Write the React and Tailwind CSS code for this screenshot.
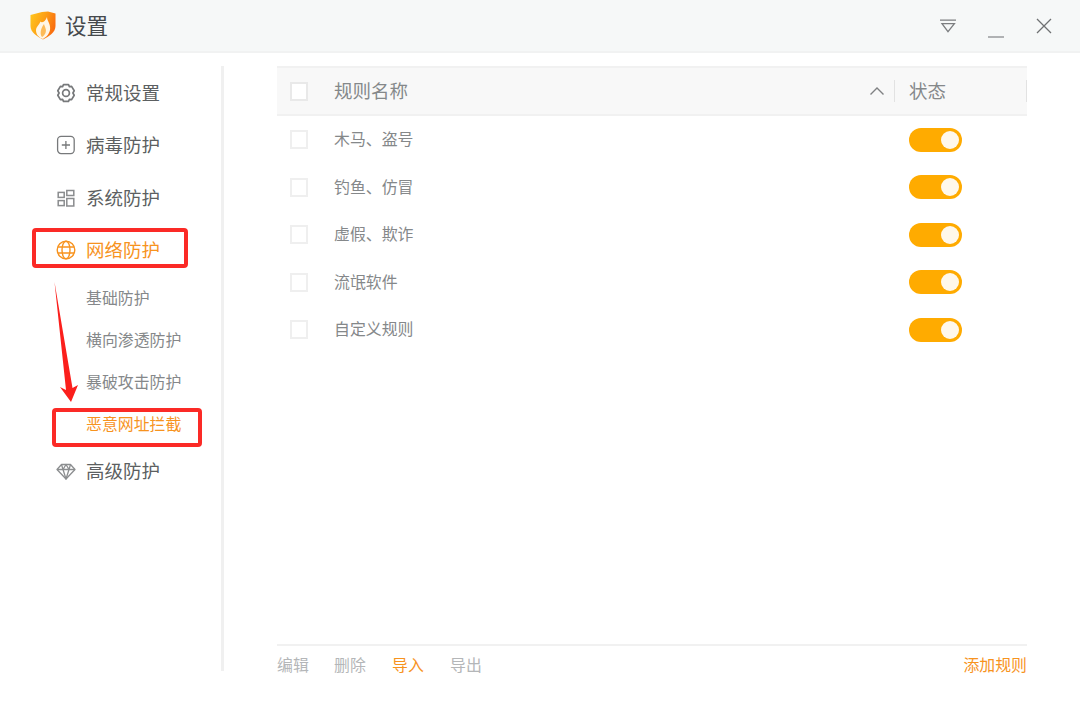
import React from "react";

function Gear() {
  return (
    <svg width="20" height="20" viewBox="0 0 20 20" fill="none" stroke="#77797b" strokeWidth="1.7" strokeLinejoin="round">
      <path d="M7.5 1.6 L12.5 1.6 L13.4 3.6 L15.6 3.4 L18.2 7.8 L16.9 10 L18.2 12.2 L15.6 16.6 L13.4 16.4 L12.5 18.4 L7.5 18.4 L6.6 16.4 L4.4 16.6 L1.8 12.2 L3.1 10 L1.8 7.8 L4.4 3.4 L6.6 3.6 Z" />
      <circle cx="10" cy="10" r="3.4" />
    </svg>
  );
}
function Plus() {
  return (
    <svg width="20" height="20" viewBox="0 0 20 20" fill="none" stroke="#77797b" strokeWidth="1.3">
      <rect x="1.6" y="1.4" width="16.6" height="17.2" rx="3.5" />
      <path d="M9.9 6v8M5.8 10h8.2" />
    </svg>
  );
}
function Blocks() {
  return (
    <svg width="20" height="20" viewBox="0 0 20 20" fill="none" stroke="#8a8c8e" strokeWidth="1.5">
      <rect x="2.2" y="4.4" width="6" height="5" />
      <rect x="2.2" y="12.6" width="6" height="5" />
      <path d="M10.8 2.6h7v5h-7zM10.8 10.6h7v7.4h-7z" />
    </svg>
  );
}
function Globe() {
  return (
    <svg width="20" height="20" viewBox="0 0 20 20" fill="none" stroke="#f7931e" strokeWidth="1.4">
      <circle cx="10" cy="10" r="8.8" />
      <ellipse cx="10" cy="10" rx="4" ry="8.8" />
      <path d="M2 7h16M2 13h16" />
    </svg>
  );
}
function Diamond() {
  return (
    <svg width="20" height="20" viewBox="0 0 20 20" fill="none" stroke="#8c8e90" strokeWidth="1.3" strokeLinejoin="round">
      <path d="M5.5 3.5h9l4.5 5-9 9.5-9-9.5z" />
      <path d="M1 8.5h18M7 8.5l3 9.5 3-9.5M5.5 3.5l1.5 5 3-5 3 5 1.5-5" />
    </svg>
  );
}

function Logo() {
  return (
    <svg width="26" height="29" viewBox="0 0 26 29">
      <defs>
        <linearGradient id="sh" x1="0" y1="0" x2="1" y2="0.4">
          <stop offset="0" stopColor="#ffc81e" />
          <stop offset="0.55" stopColor="#fda015" />
          <stop offset="1" stopColor="#f96f10" />
        </linearGradient>
      </defs>
      <path d="M0.5 4 L12 1 L18 0.5 L25.5 2.5 L25.5 15 C25.5 21.5 19 25.5 13 28.5 C7 25.5 0.5 21.5 0.5 15 Z" fill="url(#sh)" />
      <path d="M17 6 C17 10 21 13 20 19 C19.2 23.5 15.5 26.5 13 28 C9.5 27 6 24 6 19.5 C6 15.5 9 14.5 10.5 10.5 C11.5 12.5 15.5 10.5 17 6 Z" fill="#fff6e6" />
      <path d="M14 13 C14.5 16 17 18 15.5 22 C14.8 23.8 13 25.5 12 26 C10 23.5 10 18.5 14 13 Z" fill="#fdbb58" />
    </svg>
  );
}

function NavItem({ icon, label, active }) {
  return (
    <div className={`h-[52.5px] flex items-center pl-[56px] gap-[10px] text-[18.5px] ${active ? "text-[#f7931e]" : "text-[#5c5f61]"}`}>
      <span className="w-[20px] h-[20px] flex shrink-0">{icon}</span>
      <span>{label}</span>
    </div>
  );
}
function SubItem({ label, active }) {
  return (
    <div className={`h-[42px] flex items-center pl-[86px] text-[15.9px] ${active ? "text-[#f7931e]" : "text-[#85888a]"}`}>{label}</div>
  );
}
function Box({ header }) {
  return <span className={`block w-[18px] h-[19px] border-2 bg-white ${header ? "border-[#e9e9e9]" : "border-[#efefef]"}`} />;
}
function Toggle() {
  return (
    <span className="flex items-center justify-end w-[53px] h-[24px] rounded-full bg-[#ffab00] pr-[3px]">
      <span className="w-[18px] h-[18px] rounded-full bg-[#fff8ea]" />
    </span>
  );
}
function Row({ label }) {
  return (
    <div className="h-[47.5px] flex items-center text-[15.9px] text-[#85888a]">
      <span className="w-[57px] pl-[13px] flex"><Box /></span>
      <span className="flex-1 pb-[1px]">{label}</span>
      <span className="w-[118px] flex"><Toggle /></span>
    </div>
  );
}

export default function App() {
  return (
    <div className="relative w-[1080px] h-[711px] bg-white overflow-hidden flex flex-col" style={{ fontFamily: '"Noto Sans CJK SC","Noto Sans",sans-serif' }}>
      <header className="h-[53px] shrink-0 bg-[#f6f8f8] border-b-2 border-[#f1f2f2] flex items-center pl-[30px] pr-[28px]">
        <Logo />
        <span className="ml-[10px] text-[21.5px] text-[#45494c] -translate-x-[1px]">设置</span>
        <div className="ml-auto flex items-center gap-[32px]">
          <svg width="18" height="14" viewBox="0 0 18 14" fill="none" stroke="#7c7e80" strokeWidth="1.3" className="-mr-[1px]"><path d="M1 1.2h16M3 4.6h12.4L9 12.6z" /></svg>
          <svg width="16" height="16" viewBox="0 0 16 16" fill="none" stroke="#8a8c8e" strokeWidth="1.3" className="mt-[8px]"><path d="M0 15h16" /></svg>
          <svg width="16" height="16" viewBox="0 0 16 16" fill="none" stroke="#6f7173" strokeWidth="1.3"><path d="M1 1l14 14M15 1L1 15" /></svg>
        </div>
      </header>

      <div className="flex-1 flex">
        <aside className="w-[224px] h-[605px] shrink-0 mt-[13px] pt-[0.6px] border-r-[3px] border-[#f0f0f0]">
          <NavItem icon={<Gear />} label="常规设置" />
          <NavItem icon={<Plus />} label="病毒防护" />
          <NavItem icon={<Blocks />} label="系统防护" />
          <NavItem icon={<Globe />} label="网络防护" active />
          <SubItem label="基础防护" />
          <SubItem label="横向渗透防护" />
          <SubItem label="暴破攻击防护" />
          <SubItem label="恶意网址拦截" active />
          <NavItem icon={<Diamond />} label="高级防护" />
        </aside>

        <main className="w-[750px] ml-[53px] pt-[13px] flex flex-col">
          <div className="h-[50px] shrink-0 bg-[#f8f8f8] border-t-2 border-b-2 border-[#f1f1f1] flex items-center text-[18.5px] text-[#85888a]">
            <span className="w-[57px] pl-[13px] flex"><Box header /></span>
            <span className="flex-1">规则名称</span>
            <svg width="16" height="10" viewBox="0 0 16 10" fill="none" stroke="#7f8183" strokeWidth="1.4" className="mr-[9px]"><path d="M1.5 8.5 L8 2 L14.5 8.5" /></svg>
            <span className="w-[1px] h-[22px] bg-[#e2e2e2]" />
            <span className="w-[131px] pl-[14px]">状态</span>
            <span className="w-[1px] h-[22px] bg-[#e2e2e2]" />
          </div>
          <Row label="木马、盗号" />
          <Row label="钓鱼、仿冒" />
          <Row label="虚假、欺诈" />
          <Row label="流氓软件" />
          <Row label="自定义规则" />
          <div className="mt-auto mb-[27px] h-[40px] shrink-0 border-t-2 border-[#f1f1f1] flex items-center text-[15.9px] text-[#b4b6b8]">
            <span className="w-[57px]">编辑</span>
            <span className="w-[58px]">删除</span>
            <span className="w-[58px] text-[#f7931e]">导入</span>
            <span>导出</span>
            <span className="ml-auto text-[#f7931e]">添加规则</span>
          </div>
        </main>
      </div>

      {/* annotations */}
      <div className="absolute left-[32px] top-[228px] w-[156px] h-[40px] border-[4px] border-[#fb2a26] rounded-[4px]" />
      <div className="absolute left-[52px] top-[408px] w-[150px] h-[39px] border-[4px] border-[#fb2a26] rounded-[4px]" />
      <svg className="absolute left-[50px] top-[280px]" width="32" height="125" viewBox="0 0 32 125">
        <path d="M4.5 2 L16 110 L10 107 L21 122 L28 105 L22.5 108 Z" fill="#fb1f1c" />
      </svg>
    </div>
  );
}
